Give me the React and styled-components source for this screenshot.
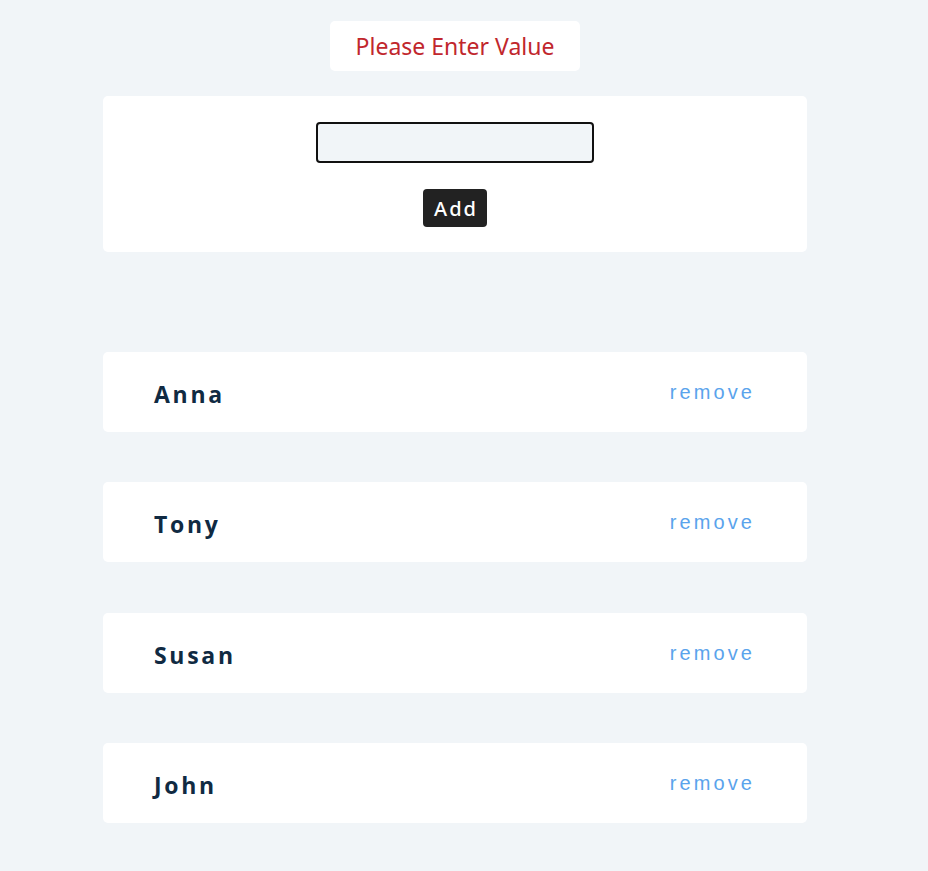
import React, { useState } from "react";
import styled, { createGlobalStyle } from "styled-components";

const GlobalStyle = createGlobalStyle`
  body {
    margin: 0;
    background: #f1f5f8;
    font-family: "Noto Sans", "Open Sans", sans-serif;
  }
`;

const initialPeople = [
  { id: 1, name: "Anna" },
  { id: 2, name: "Tony" },
  { id: 3, name: "Susan" },
  { id: 4, name: "John" },
];

export default function App() {
  const [people, setPeople] = useState(initialPeople);
  const [value, setValue] = useState("");

  const removePerson = (id) => setPeople((p) => p.filter((x) => x.id !== id));

  const handleSubmit = (e) => {
    e.preventDefault();
    if (!value) return;
    setPeople((p) => [...p, { id: Date.now(), name: value }]);
    setValue("");
  };

  return (
    <>
      <GlobalStyle />
      <Page>
        <Alert>Please Enter Value</Alert>
        <FormCard onSubmit={handleSubmit}>
          <Input
            autoFocus
            value={value}
            onChange={(e) => setValue(e.target.value)}
          />
          <AddButton type="submit">Add</AddButton>
        </FormCard>
        <List>
          {people.map((person) => (
            <Item key={person.id}>
              <Name>{person.name}</Name>
              <RemoveButton onClick={() => removePerson(person.id)}>
                remove
              </RemoveButton>
            </Item>
          ))}
        </List>
      </Page>
    </>
  );
}

const Page = styled.main`
  width: 704px;
  margin: 0 0 0 103px;
  padding-top: 21px;
  padding-bottom: 48px;
  display: flex;
  flex-direction: column;
  align-items: center;
`;

const Alert = styled.div`
  width: 250px;
  height: 50px;
  display: flex;
  align-items: center;
  justify-content: center;
  background: #fff;
  border-radius: 5px;
  color: #c1272d;
  font-size: 23px;
  margin-bottom: 25px;
`;

const FormCard = styled.form`
  width: 100%;
  height: 156px;
  box-sizing: border-box;
  background: #fff;
  border-radius: 5px;
  display: flex;
  flex-direction: column;
  align-items: center;
  padding-top: 26px;
`;

const Input = styled.input`
  width: 278px;
  height: 41px;
  box-sizing: border-box;
  border: 2px solid #111;
  border-radius: 4px;
  background: #f1f5f8;
  padding: 0 14px;
  font-size: 18px;
  outline: none;
  margin-bottom: 26px;
`;

const AddButton = styled.button`
  width: 64px;
  height: 38px;
  border: none;
  border-radius: 4px;
  background: #222;
  color: #fff;
  font-family: "Noto Sans", "Open Sans", sans-serif;
  font-size: 20px;
  font-weight: 500;
  letter-spacing: 2px;
  padding: 0 0 0 2px;
  cursor: pointer;
`;

const List = styled.ul`
  list-style: none;
  margin: 100px 0 0;
  padding: 0;
  width: 100%;
  display: flex;
  flex-direction: column;
  gap: 50.4px;
`;

const Item = styled.li`
  height: 80px;
  box-sizing: border-box;
  background: #fff;
  border-radius: 5px;
  padding: 0 52px 0 51px;
  display: flex;
  align-items: center;
  justify-content: space-between;
`;

const Name = styled.h4`
  margin: 4px 0 0;
  font-family: "Open Sans", "Noto Sans", sans-serif;
  font-weight: 700;
  font-size: 23px;
  letter-spacing: 2.7px;
  color: #102a42;
`;

const RemoveButton = styled.button`
  border: none;
  background: transparent;
  padding: 0;
  margin-top: 1px;
  font-family: "Liberation Sans", Arial, sans-serif;
  font-size: 20px;
  letter-spacing: 3.1px;
  color: #5aa3ec;
  cursor: pointer;
`;
